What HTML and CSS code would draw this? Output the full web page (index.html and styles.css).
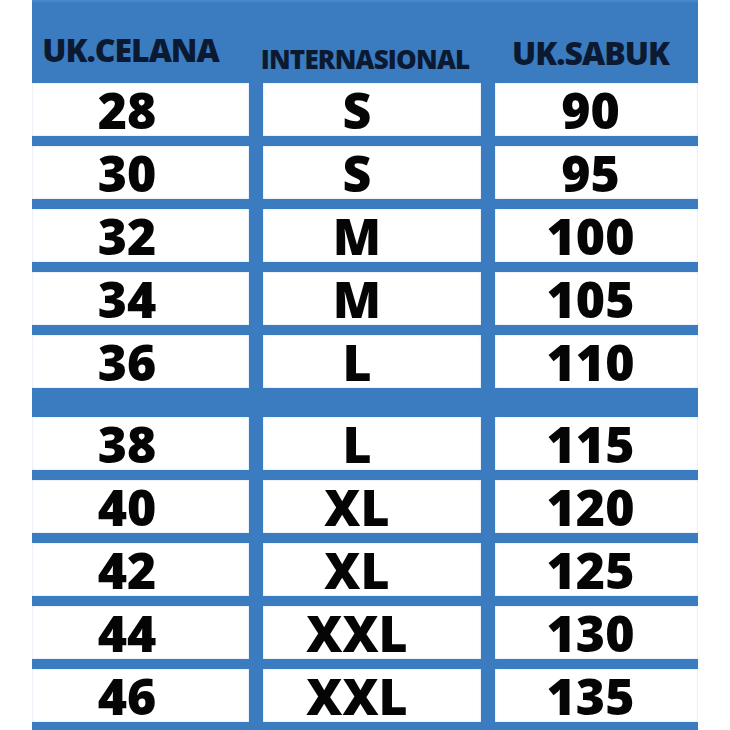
FILE: index.html
```html
<!DOCTYPE html>
<html lang="id">
<head>
<meta charset="utf-8">
<title>Tabel Ukuran</title>
<link rel="stylesheet" href="styles.css">
</head>
<body>
<div class="chart">
  <div class="head">
    <div class="h h1">UK.CELANA</div>
    <div class="h h2">INTERNASIONAL</div>
    <div class="h h3">UK.SABUK</div>
  </div>
  <div class="row"><div class="c c1">28</div><div class="c c2">S</div><div class="c c3">90</div></div>
  <div class="row"><div class="c c1">30</div><div class="c c2">S</div><div class="c c3">95</div></div>
  <div class="row"><div class="c c1">32</div><div class="c c2">M</div><div class="c c3">100</div></div>
  <div class="row"><div class="c c1">34</div><div class="c c2">M</div><div class="c c3">105</div></div>
  <div class="row"><div class="c c1">36</div><div class="c c2">L</div><div class="c c3">110</div></div>
  <div class="row split"><div class="c c1">38</div><div class="c c2">L</div><div class="c c3">115</div></div>
  <div class="row"><div class="c c1">40</div><div class="c c2">XL</div><div class="c c3">120</div></div>
  <div class="row"><div class="c c1">42</div><div class="c c2">XL</div><div class="c c3">125</div></div>
  <div class="row"><div class="c c1">44</div><div class="c c2">XXL</div><div class="c c3">130</div></div>
  <div class="row"><div class="c c1">46</div><div class="c c2">XXL</div><div class="c c3">135</div></div>
</div>
</body>
</html>
```
FILE: styles.css
```css
html, body {
  margin: 0;
  padding: 0;
  background: #ffffff;
}
body {
  font-family: "Open Sans", "Liberation Sans", sans-serif;
}
.chart {
  margin-left: 32px;
  width: 666px;
  height: 730px;
  background: #3b7cc1;
  display: flex;
  flex-direction: column;
  gap: 10px;
  box-sizing: border-box;
  padding-bottom: 8px;
}
.head,
.row {
  display: grid;
  grid-template-columns: 217px 218px 203px;
  column-gap: 14px;
}
.head {
  height: 83px;
  margin-bottom: -10px;
  background: linear-gradient(#4e8ccc 0, #3b7cc1 3px);
}
.h {
  display: flex;
  align-items: flex-end;
  justify-content: center;
  color: #0c1a31;
  font-weight: 800;
  line-height: 1;
}
.h1 {
  font-size: 32px;
  padding-bottom: 17px;
  padding-right: 20px;
  letter-spacing: -1px;
}
.h2 {
  font-size: 26px;
  padding-bottom: 11px;
  padding-right: 14px;
  letter-spacing: -0.8px;
}
.h3 {
  font-size: 32px;
  padding-bottom: 14px;
  padding-right: 12px;
  letter-spacing: -1px;
}
.row {
  height: 53px;
}
.row.split {
  margin-top: 19px;
}
.c {
  background: #ffffff;
  box-shadow: inset 0 0 2px rgba(59, 124, 193, 0.35);
  display: flex;
  align-items: flex-end;
  justify-content: center;
  color: #050505;
  font-weight: 800;
  font-size: 50px;
  line-height: 1;
  padding-bottom: 1px;
  box-sizing: border-box;
}
.c1 {
  padding-right: 27px;
}
.c2 {
  padding-right: 30px;
}
.c3 {
  padding-right: 12px;
}
```
